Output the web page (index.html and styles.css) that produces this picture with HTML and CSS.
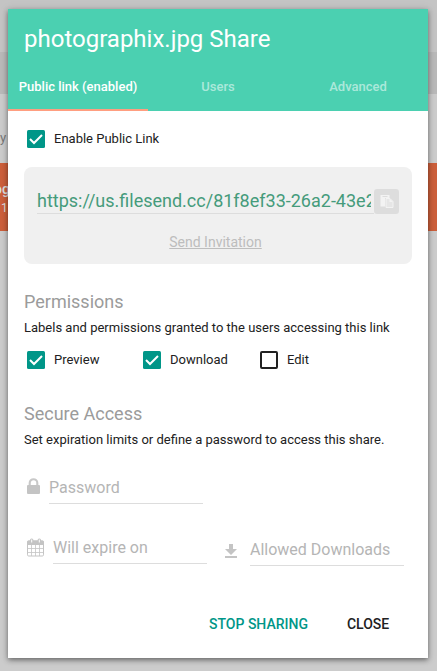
FILE: index.html
```html
<!DOCTYPE html>
<html lang="en">
<head>
<meta charset="utf-8">
<title>Share</title>
<link rel="stylesheet" href="styles.css">
</head>
<body>
<div class="backdrop">
  <div class="bar"></div>
  <div class="toolbar"></div>
  <div class="column-head"><span>y</span></div>
  <div class="file-row"><b>og</b><span>1</span></div>
</div>
<main class="dialog">
  <header class="header">
    <h1 class="title">photographix.jpg Share</h1>
    <nav class="tabs">
      <a class="tab active">Public link (enabled)</a>
      <a class="tab">Users</a>
      <a class="tab">Advanced</a>
    </nav>
  </header>
  <section class="content">
    <label class="check">
      <svg class="box" viewBox="0 0 18 18"><rect width="18" height="18" rx="1.500" fill="#009688"/><path d="M3 9l4 4 8-8" fill="none" stroke="#fff" stroke-width="2"/></svg>
      <span>Enable Public Link</span>
    </label>
    <div class="link-card">
      <div class="link-row">
        <div class="url">https://us.filesend.cc/81f8ef33-26a2-43e2-9</div>
        <button class="copy"><svg viewBox="0 0 14 14"><path d="M.5 0h9v3H5v8.500H.5z" fill="#f3f3f3"/><path d="M2.500 1.500h5" stroke="#ddd"/><path d="M6 3.500h4l3 3v6H6z" fill="#e6e6e6" stroke="#f3f3f3"/><path d="M9.500 3.500v3.500H13z" fill="#f3f3f3"/></svg></button>
      </div>
      <a class="invite">Send Invitation</a>
    </div>
    <h2 class="heading">Permissions</h2>
    <p class="note">Labels and permissions granted to the users accessing this link</p>
    <div class="checks">
      <label class="check">
        <svg class="box" viewBox="0 0 18 18"><rect width="18" height="18" rx="1.500" fill="#009688"/><path d="M3 9l4 4 8-8" fill="none" stroke="#fff" stroke-width="2"/></svg>
        <span>Preview</span>
      </label>
      <label class="check">
        <svg class="box" viewBox="0 0 18 18"><rect width="18" height="18" rx="1.500" fill="#009688"/><path d="M3 9l4 4 8-8" fill="none" stroke="#fff" stroke-width="2"/></svg>
        <span>Download</span>
      </label>
      <label class="check">
        <svg class="box" viewBox="0 0 18 18"><rect x="1" y="1" width="16" height="16" rx="1" fill="none" stroke="#212121" stroke-width="2"/></svg>
        <span>Edit</span>
      </label>
    </div>
    <h2 class="heading h-secure">Secure Access</h2>
    <p class="note">Set expiration limits or define a password to access this share.</p>
    <div class="field password">
      <svg class="lock" viewBox="0 0 13 16"><path d="M2.700 8V5a3.800 3.800 0 0 1 7.600 0v3" fill="none" stroke="#c8c8c8" stroke-width="2.100"/><rect y="7" width="13" height="9" rx="1" fill="#c4c4c4"/></svg>
      <div class="input">Password</div>
    </div>
    <div class="fields">
      <div class="field">
        <svg class="calendar" viewBox="0 0 17 19"><rect x=".5" y="3" width="16" height="15" rx="1.200" fill="#fff" stroke="#c4c4c4"/><path d="M0 7V4a1.500 1.500 0 0 1 1.500-1.500h14A1.500 1.500 0 0 1 17 4v3z" fill="#c4c4c4"/><path d="M4.500 7v11M8.500 7v11M12.500 7v11M1 10.500h15M1 14.500h15" stroke="#c4c4c4" stroke-width=".8"/><rect x="3" y=".5" width="3.400" height="5" rx="1.500" fill="#c4c4c4"/><rect x="10.600" y=".5" width="3.400" height="5" rx="1.500" fill="#c4c4c4"/><path d="M4.700 1.500v3M12.300 1.500v3" stroke="#fff"/></svg>
        <div class="input">Will expire on</div>
      </div>
      <div class="field downloads">
        <svg class="arrow" viewBox="0 0 12 14"><path d="M4 0h4v5h4L6 11 0 5h4zM0 12h12v2H0z" fill="#c4c4c4"/></svg>
        <div class="input">Allowed Downloads</div>
      </div>
    </div>
  </section>
  <footer class="actions">
    <button class="action stop">STOP SHARING</button>
    <button class="action">CLOSE</button>
  </footer>
</main>
</body>
</html>
```
FILE: styles.css
```css
* { box-sizing: border-box; }
body {
  margin: 0;
  width: 437px;
  height: 671px;
  overflow: hidden;
  background: #ccc;
  font-family: Roboto, sans-serif;
  color: #212121;
}
h1, h2, p { margin: 0; font-weight: 400; }
button { border: 0; padding: 0; background: none; font-family: inherit; }
svg { display: block; flex: none; }

.bar { height: 52px; background: #c4c4c4; }
.toolbar { height: 42px; background: #b9b9b9; }
.column-head { height: 69px; padding-top: 35px; font-size: 13px; line-height: 18px; color: #777; }
.file-row {
  height: 68px;
  padding-top: 17px;
  background: #cc5f3b;
  color: #ddd;
  font-size: 14px;
  line-height: 18px;
}
.file-row b { display: block; margin-left: -6px; font-weight: 500; }
.file-row span { display: block; padding-left: 1px; font-size: 12px; line-height: 20px; }

.dialog {
  position: absolute;
  left: 8px;
  top: 9px;
  width: 420px;
  height: 649px;
  display: flex;
  flex-direction: column;
  background: #fff;
  white-space: nowrap;
  box-shadow: 0 2px 5px rgba(0, 0, 0, .45), 0 1px 10px rgba(0, 0, 0, .1);
}
.header { height: 102px; flex: none; background: #4bd0b1; color: #fff; }
.title { height: 54px; padding: 14px 16px 0; font-size: 24px; line-height: 32px; }
.tabs { display: grid; grid-template-columns: repeat(3, 1fr); height: 48px; }
.tab {
  display: flex;
  justify-content: center;
  align-items: center;
  border-bottom: 2px solid transparent;
  font-size: 13px;
  font-weight: 500;
  color: rgba(255, 255, 255, .55);
}
.tab.active { border-color: #ff9e80; color: #fff; }

.content { padding: 16px 16px 0; }
.check { display: flex; align-items: center; height: 24px; padding-left: 3px; font-size: 13px; }
.check span { padding-bottom: 2px; }
.box { width: 18px; height: 18px; margin-right: 9px; }
.link-card {
  height: 97px;
  margin-top: 16px;
  padding: 22px 13px 0;
  border-radius: 8px;
  background: #f0f0f0;
}
.link-row { display: flex; height: 25px; }
.url {
  width: 337px;
  padding-right: 3px;
  border-bottom: 1px solid #ddd;
  overflow: clip;
  overflow-clip-margin: content-box;
  font-size: 18px;
  line-height: 24px;
  color: #459b7b;
}
.copy {
  display: grid;
  place-items: center;
  width: 25px;
  height: 25px;
  border-radius: 3px;
  background: #ddd;
}
.copy svg { width: 14px; height: 14px; }
.invite {
  display: block;
  margin: 18px 5px 0 0;
  text-align: center;
  text-decoration: underline;
  font-size: 14px;
  line-height: 20px;
  color: #bdbdbd;
}
.heading { margin-top: 26px; font-size: 18px; line-height: 24px; color: #9b9b9b; }
.note { margin-top: 4px; font-size: 13px; line-height: 20px; }
.checks { display: grid; grid-template-columns: 116px 117px 1fr; margin-top: 10px; }
.h-secure { margin-top: 30px; }
.field { display: flex; color: #b5b5b5; }
.input {
  width: 154px;
  height: 29px;
  border-bottom: 1px solid #ddd;
  font-size: 16px;
  line-height: 26px;
}
.password { margin-top: 25px; padding-left: 3px; }
.lock { width: 13px; height: 16px; margin: 3px 9px 0 0; }
.fields { display: flex; gap: 18px; margin-top: 31px; padding-left: 3px; }
.calendar { width: 17px; height: 19px; margin: 3px 9px 0 0; }
.downloads { margin-top: 2px; }
.arrow { width: 12px; height: 14px; margin: 7px 13px 0 0; }
.actions { display: flex; gap: 39px; margin-top: 49px; padding-left: 201px; }
.action { font-size: 14px; font-weight: 500; line-height: 18px; color: #212121; }
.stop { color: #009688; }
```
